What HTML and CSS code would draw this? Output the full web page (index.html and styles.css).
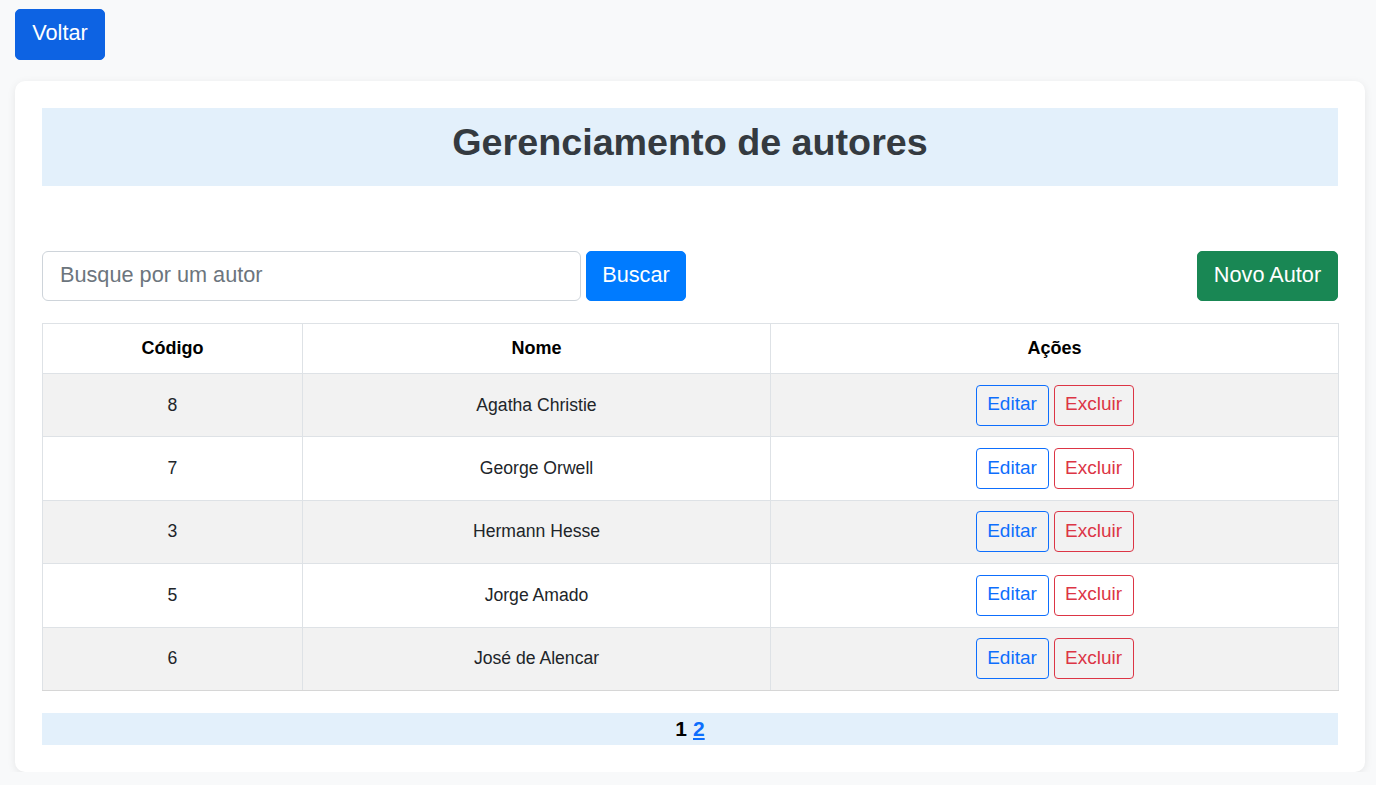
FILE: index.html
```html
<!DOCTYPE html>
<html lang="pt-BR">
<head>
<meta charset="utf-8">
<title>Gerenciamento de autores</title>
<link rel="stylesheet" href="styles.css">
</head>
<body>
<div class="top">
  <button class="btn btn-back">Voltar</button>
</div>
<main class="card">
  <header class="title-box"><h1>Gerenciamento de autores</h1></header>
  <div class="toolbar">
    <div class="search">
      <input class="search-input" type="text" placeholder="Busque por um autor">
      <button class="btn btn-search">Buscar</button>
    </div>
    <button class="btn btn-new">Novo Autor</button>
  </div>
  <table class="grid">
    <colgroup><col class="c1"><col class="c2"><col class="c3"></colgroup>
    <thead>
      <tr><th>Código</th><th>Nome</th><th>Ações</th></tr>
    </thead>
    <tbody>
      <tr><td>8</td><td>Agatha Christie</td><td><div class="actions"><button class="btn-o edit">Editar</button><button class="btn-o del">Excluir</button></div></td></tr>
      <tr><td>7</td><td>George Orwell</td><td><div class="actions"><button class="btn-o edit">Editar</button><button class="btn-o del">Excluir</button></div></td></tr>
      <tr><td>3</td><td>Hermann Hesse</td><td><div class="actions"><button class="btn-o edit">Editar</button><button class="btn-o del">Excluir</button></div></td></tr>
      <tr><td>5</td><td>Jorge Amado</td><td><div class="actions"><button class="btn-o edit">Editar</button><button class="btn-o del">Excluir</button></div></td></tr>
      <tr><td>6</td><td>José de Alencar</td><td><div class="actions"><button class="btn-o edit">Editar</button><button class="btn-o del">Excluir</button></div></td></tr>
    </tbody>
  </table>
  <nav class="pager"><span class="current">1</span> <a href="#" class="page">2</a></nav>
</main>
</body>
</html>
```
FILE: styles.css
```css
* { box-sizing: border-box; }
html, body { margin: 0; }
body {
  background: #f8f9fa;
  font-family: "Liberation Sans", Arial, sans-serif;
  color: #212529;
  padding: 9px 11px 0 15px;
}
.top { height: 72px; }
.btn {
  font-family: inherit;
  border: 1px solid transparent;
  border-radius: 5px;
  color: #fff;
  font-size: 21.7px;
  line-height: 24px;
  cursor: pointer;
  padding: 0 0 3px 0;
}
.btn-back {
  background: #0d63e3;
  border-color: #0d63e3;
  width: 90px;
  height: 51px;
}
.card {
  background: #fff;
  border-radius: 10px;
  box-shadow: 0 2px 8px rgba(0,0,0,0.08);
  padding: 27px 27px 27px 27px;
}
.title-box {
  background: #e3f0fb;
  height: 78px;
  display: flex;
  align-items: center;
  justify-content: center;
}
.title-box h1 {
  margin: 0;
  font-size: 37.7px;
  font-weight: bold;
  color: #343a40;
  padding-bottom: 10px;
}
.toolbar {
  margin-top: 65px;
  display: flex;
  justify-content: space-between;
  align-items: center;
  height: 50px;
}
.search { display: flex; gap: 5px; }
.search-input {
  width: 539px;
  height: 50px;
  border: 1px solid #ced4da;
  border-radius: 6px;
  padding: 0 0 2px 17px;
  font-family: inherit;
  font-size: 21.7px;
  color: #495057;
  outline: none;
}
.search-input::placeholder { color: #6c757d; }
.btn-search {
  background: #007bff;
  border-color: #007bff;
  width: 100px;
  height: 50px;
}
.btn-new {
  background: #198754;
  border-color: #198754;
  width: 141px;
  height: 50px;
}
.grid {
  margin-top: 22px;
  width: 100%;
  border-collapse: collapse;
  table-layout: fixed;
  font-size: 17.6px;
}
.c1 { width: 260px; }
.c2 { width: 468px; }
.c3 { width: 568px; }
.grid th, .grid td {
  border: 1px solid #dee2e6;
  text-align: center;
  padding: 0;
}
.grid th {
  height: 50px;
  font-weight: bold;
  color: #000;
  font-size: 18px;
}
.grid td { height: 63.4px; color: #212529; }
.grid tbody tr:nth-child(odd) td { background: #f2f2f2; }
.grid tbody tr:last-child td { border-bottom-color: #d6d6d6; }
.actions { display: flex; justify-content: center; gap: 5px; }
.btn-o {
  background: transparent;
  font-family: inherit;
  font-size: 19px;
  height: 41px;
  border-radius: 4px;
  padding: 0 0 2px 0;
  cursor: pointer;
}
.edit { width: 73px; color: #0d6efd; border: 1px solid #0d6efd; }
.del { width: 80px; color: #dc3545; border: 1px solid #dc3545; }
.pager {
  margin-top: 22px;
  background: #e3f0fb;
  height: 32px;
  display: flex;
  align-items: center;
  justify-content: center;
  gap: 6px;
  font-size: 21px;
  font-weight: bold;
}
.current { color: #000; }
.page { color: #0d6efd; text-decoration: underline; }
```
